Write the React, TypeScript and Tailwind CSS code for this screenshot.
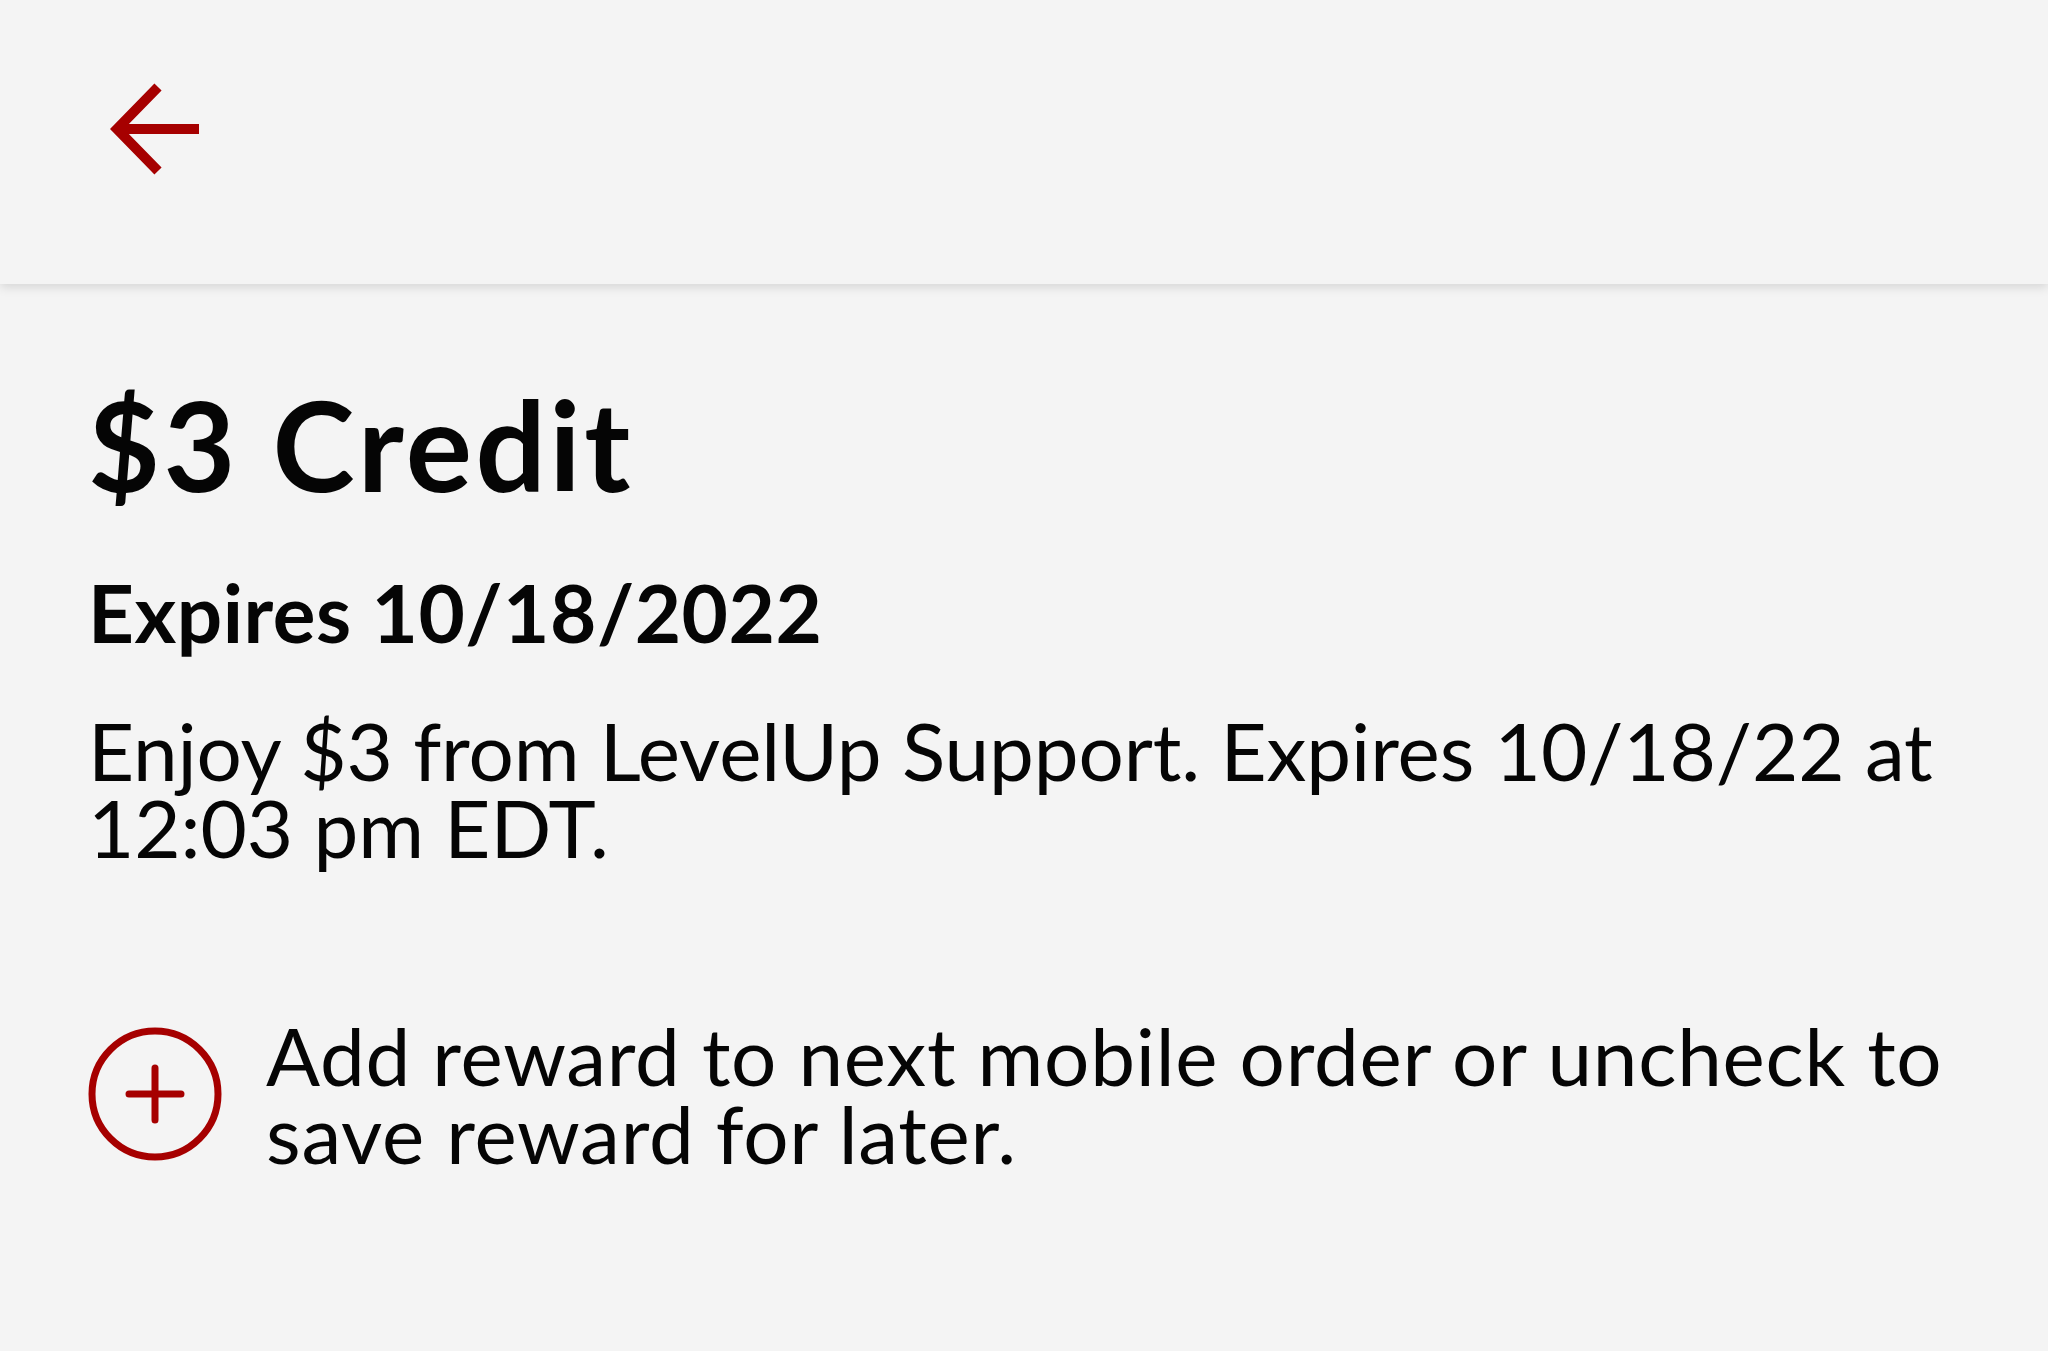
import React from "react";

const BackArrow: React.FC = () => (
  <svg width="96" height="96" viewBox="0 0 96 96" fill="none">
    <path
      d="M51 6 L10 48 L51 90 M10 48 H92"
      stroke="#a60000"
      strokeWidth="10"
      strokeLinecap="butt"
      strokeLinejoin="miter"
    />
  </svg>
);

const AddCircle: React.FC = () => (
  <svg width="134" height="134" viewBox="0 0 134 134" fill="none" className="shrink-0">
    <circle cx="67" cy="67" r="63" stroke="#a60000" strokeWidth="7" />
    <path d="M67 41 V93 M41 67 H93" stroke="#a60000" strokeWidth="7" strokeLinecap="round" />
  </svg>
);

const App: React.FC = () => {
  return (
    <div className="min-h-screen w-full bg-[#f4f4f4] text-[#050505] font-['Lato',sans-serif]">
      <header className="relative z-10 h-[284px] bg-[#f4f4f4] pl-[107px] pt-[81px] shadow-[0_3px_10px_rgba(0,0,0,0.13)]">
        <button aria-label="Back" className="block">
          <BackArrow />
        </button>
      </header>

      <main className="px-[88px]">
        <h1 className="mt-[98px] text-[124px] leading-[124px] font-bold tracking-[3.5px]">$3 Credit</h1>
        <h2 className="mt-[66px] text-[80px] leading-[80px] font-bold tracking-[0.5px]">Expires 10/18/2022</h2>
        <p className="mt-[60px] text-[80px] leading-[77px] tracking-[-0.1px]">
          Enjoy $3 from LevelUp Support. Expires 10/18/22 at 12:03 pm EDT.
        </p>

        <div className="mt-[150px] flex items-center gap-[44px]">
          <AddCircle />
          <p className="text-[80px] leading-[78px] tracking-[0.75px]">
            Add reward to next mobile order or uncheck to save reward for later.
          </p>
        </div>
      </main>
    </div>
  );
};

export default App;
